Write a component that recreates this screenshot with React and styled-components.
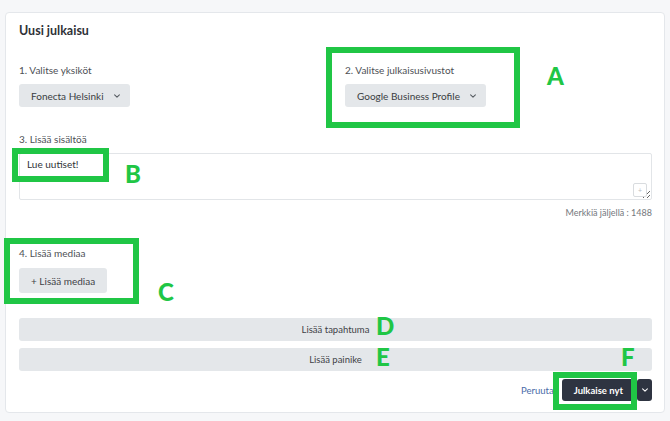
import React from 'react';
import styled, { createGlobalStyle } from 'styled-components';

const GlobalStyle = createGlobalStyle`
  *, *::before, *::after {
    box-sizing: border-box;
  }
  html, body {
    margin: 0;
    padding: 0;
    background: #f6f7f9;
    overflow: hidden;
  }
  body {
    font-family: Lato, "Open Sans", sans-serif;
    color: #3b3e43;
  }
`;

const GREEN = '#20c645';

const Page = styled.div`
  padding: 12px 5px 8px 5px;
`;

const Card = styled.div`
  position: relative;
  display: flex;
  flex-direction: column;
  background: #fff;
  border: 1px solid #e4e7eb;
  border-radius: 4px;
  padding: 9px 12px 11px 13px;
`;

const Title = styled.h1`
  margin: 0 0 24px;
  font-size: 12.5px;
  font-weight: 700;
  line-height: 17px;
  color: #2f3237;
`;

const Columns = styled.div`
  display: grid;
  grid-template-columns: 326px 1fr;
`;

const Field = styled.div`
  display: flex;
  flex-direction: column;
  align-items: flex-start;
  gap: ${p => p.$gap || 7}px;
  margin-top: ${p => p.$top || 0}px;
`;

const Label = styled.div`
  font-size: 10px;
  line-height: 14px;
  color: #4d5055;
`;

const Select = styled.button`
  display: flex;
  align-items: center;
  gap: 9px;
  height: 23px;
  margin: 0;
  padding: 0 9px 0 12px;
  border: none;
  border-radius: 3px;
  background: #e4e7ea;
  font-family: inherit;
  font-size: 10px;
  color: #3a3d42;
`;

const Chevron = ({ color = '#555a60', size = 8 }) => (
  <svg width={size} height={size} viewBox="0 0 10 10" fill="none">
    <path d="M2 3.5 L5 6.5 L8 3.5" stroke={color} strokeWidth="1.3" strokeLinecap="round" strokeLinejoin="round" />
  </svg>
);

const AreaWrap = styled.div`
  position: relative;
  align-self: stretch;
`;

const TextArea = styled.textarea`
  display: block;
  width: 100%;
  height: 47px;
  margin: 0;
  border: 1px solid #e2e5e8;
  border-radius: 2px;
  padding: 3px 7px;
  font-family: inherit;
  font-size: 10px;
  line-height: 14px;
  color: #2f3237;
  resize: vertical;
  outline: none;
`;

const EmojiButton = styled.span`
  position: absolute;
  right: 5px;
  bottom: 3px;
  width: 14px;
  height: 14px;
  border: 1px solid #d9dcdf;
  border-radius: 2px;
  background: #fff;
  display: flex;
  align-items: center;
  justify-content: center;
  font-size: 7px;
  color: #b8bcc0;
`;

const Counter = styled.div`
  align-self: stretch;
  margin-top: -1px;
  text-align: right;
  font-size: 9px;
  line-height: 14px;
  color: #74787d;
`;

const MediaButton = styled.button`
  display: flex;
  align-items: center;
  height: 25px;
  margin: 0;
  padding: 0 12px;
  border: none;
  border-radius: 3px;
  background: #e4e7ea;
  font-family: inherit;
  font-size: 10px;
  color: #3f4247;
`;

const Actions = styled.div`
  display: flex;
  flex-direction: column;
  gap: 7px;
  margin-top: 25px;
`;

const WideButton = styled.div`
  display: flex;
  align-items: center;
  justify-content: center;
  height: 23px;
  border-radius: 3px;
  background: #e4e7ea;
  font-size: 9.5px;
  color: #3f4247;
  cursor: pointer;
`;

const Footer = styled.div`
  display: flex;
  justify-content: flex-end;
  align-items: center;
  gap: 8px;
  margin-top: 8px;
  height: 22px;
`;

const Cancel = styled.a`
  font-size: 9.5px;
  color: #4a6ba8;
`;

const ButtonGroup = styled.div`
  display: flex;
  gap: 2px;
  height: 22px;
`;

const DarkButton = styled.button`
  display: flex;
  align-items: center;
  justify-content: center;
  height: 22px;
  margin: 0;
  padding: ${p => (p.$icon ? '0' : '0 12px')};
  width: ${p => (p.$icon ? '15px' : 'auto')};
  border: none;
  border-radius: 3px;
  background: #2e3441;
  color: #fff;
  font-family: inherit;
  font-size: 9.5px;
  font-weight: 700;
`;

/* green annotation frames and letters drawn over the form */
const Mark = styled.div`
  position: absolute;
  left: ${p => p.$x}px;
  top: ${p => p.$y}px;
  width: ${p => p.$w}px;
  height: ${p => p.$h}px;
  border: 6px solid ${GREEN};
  pointer-events: none;
`;

const Letter = styled.span`
  position: absolute;
  left: ${p => p.$x}px;
  top: ${p => p.$y}px;
  font-family: Lato, sans-serif;
  font-size: 24px;
  font-weight: 900;
  line-height: 1;
  color: ${GREEN};
`;

export default function App() {
  return (
    <Page>
      <GlobalStyle />
      <Card>
        <Title>Uusi julkaisu</Title>

        <Columns>
          <Field>
            <Label>1. Valitse yksiköt</Label>
            <Select>
              Fonecta Helsinki <Chevron />
            </Select>
          </Field>
          <Field>
            <Label>2. Valitse julkaisusivustot</Label>
            <Select>
              Google Business Profile <Chevron />
            </Select>
          </Field>
        </Columns>

        <Field $top={25}>
          <Label>3. Lisää sisältöä</Label>
          <AreaWrap>
            <TextArea defaultValue="Lue uutiset!" />
            <EmojiButton>+</EmojiButton>
          </AreaWrap>
          <Counter>Merkkiä jäljellä : 1488</Counter>
        </Field>

        <Field $top={26} $gap={8}>
          <Label>4. Lisää mediaa</Label>
          <MediaButton>+ Lisää mediaa</MediaButton>
        </Field>

        <Actions>
          <WideButton>Lisää tapahtuma</WideButton>
          <WideButton>Lisää painike</WideButton>
        </Actions>

        <Footer>
          <Cancel>Peruuta</Cancel>
          <ButtonGroup>
            <DarkButton>Julkaise nyt</DarkButton>
            <DarkButton $icon>
              <Chevron color="#ffffff" />
            </DarkButton>
          </ButtonGroup>
        </Footer>

        <Mark $x={320} $y={34} $w={194} $h={81} />
        <Mark $x={6} $y={135} $w={97} $h={34} />
        <Mark $x={-2} $y={225} $w={135} $h={66} />
        <Mark $x={547} $y={359} $w={84} $h={38} />

        <Letter $x={541} $y={51}>A</Letter>
        <Letter $x={119} $y={149}>B</Letter>
        <Letter $x={152} $y={267}>C</Letter>
        <Letter $x={370} $y={301}>D</Letter>
        <Letter $x={370} $y={332}>E</Letter>
        <Letter $x={615} $y={332}>F</Letter>
      </Card>
    </Page>
  );
}
